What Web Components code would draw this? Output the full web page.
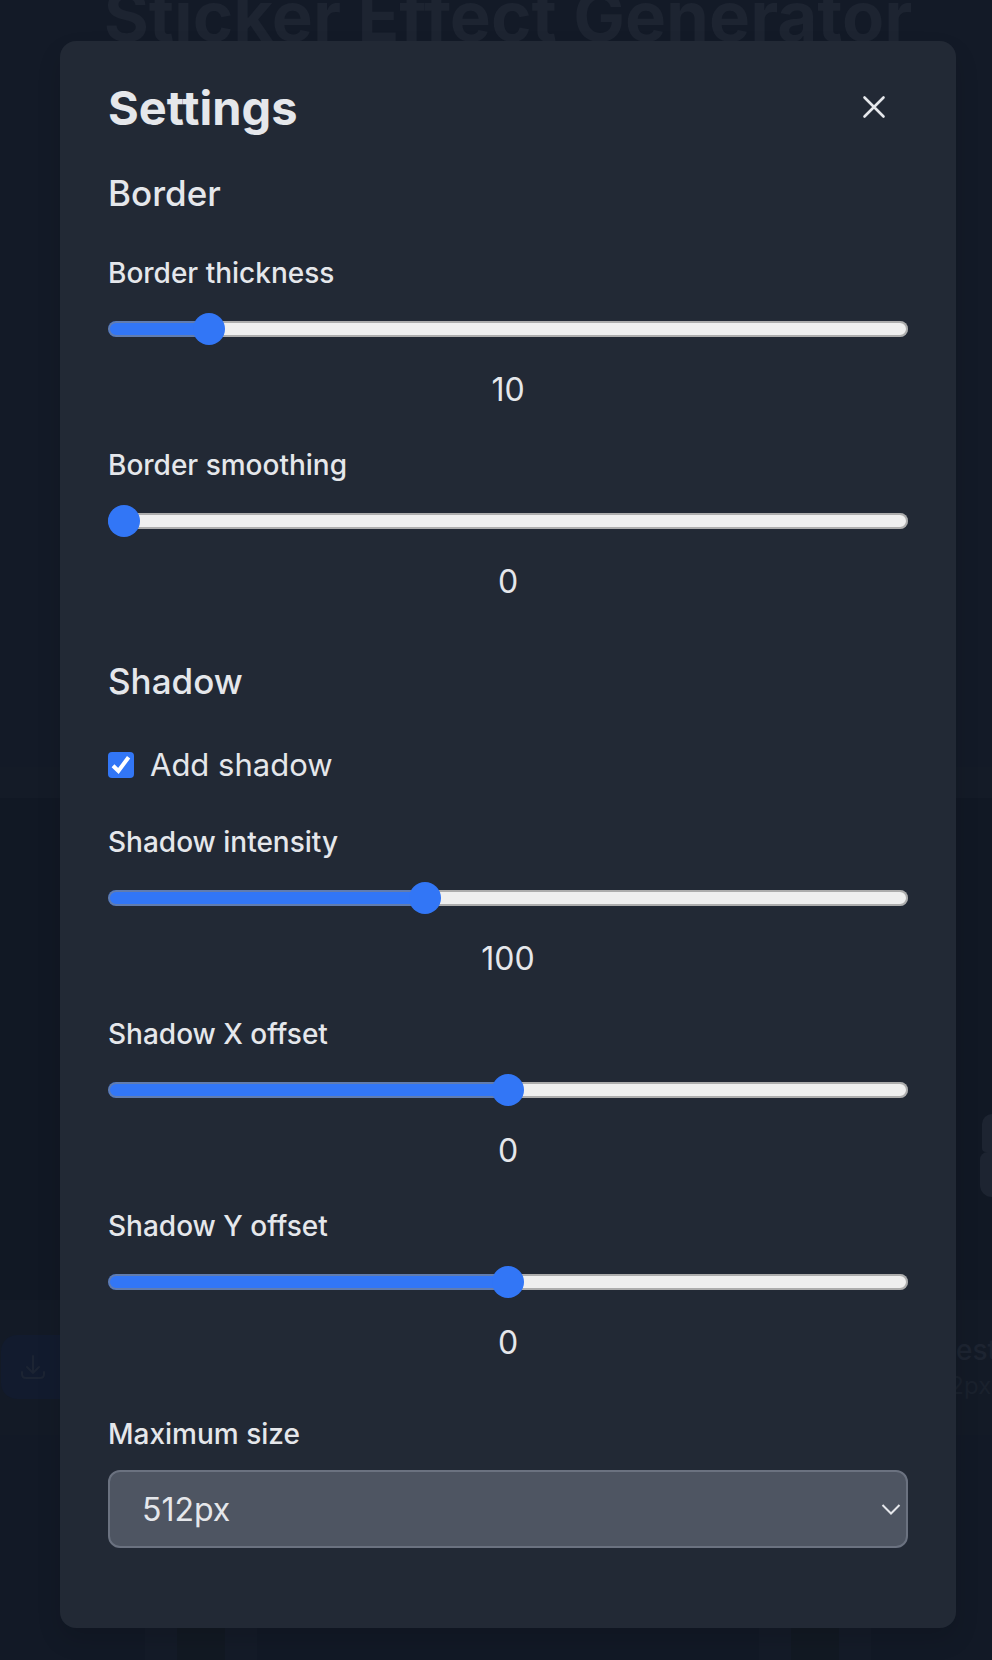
<!DOCTYPE html>
<html lang="en">
<head>
<meta charset="utf-8">
<meta name="viewport" content="width=device-width, initial-scale=1">
<title>Sticker Effect Generator</title>
<style>
  html { background: #121926; }
  body { margin: 0; font-family: Inter, "Liberation Sans", sans-serif; color: #e5e7eb; }
</style>
</head>
<body>
<sticker-app>
  <settings-dialog heading="Settings">
    <settings-group heading="Border">
      <range-field label="Border thickness" min="0" max="90" value="10"></range-field>
      <range-field label="Border smoothing" min="0" max="90" value="0"></range-field>
    </settings-group>
    <settings-group heading="Shadow">
      <check-field checked>Add shadow</check-field>
      <range-field label="Shadow intensity" min="0" max="255" value="100"></range-field>
      <range-field label="Shadow X offset" min="-50" max="50" value="0"></range-field>
      <range-field label="Shadow Y offset" min="-50" max="50" value="0"></range-field>
    </settings-group>
    <select-field label="Maximum size" options="512px,1024px,2048px"></select-field>
  </settings-dialog>
</sticker-app>

<script>
class BaseElement extends HTMLElement {
  render(html) {
    const template = document.createElement('template');
    template.innerHTML = html;
    this.attachShadow({ mode: 'open' }).append(template.content.cloneNode(true));
  }
}

class StickerApp extends BaseElement {
  connectedCallback() {
    this.render(`
      <style>
        :host { display: block; position: relative; padding: 41px 36px 32px 60px; }
        page-backdrop { position: absolute; inset: 0; }
        main { position: relative; max-width: 896px; margin: 0 auto; }
      </style>
      <page-backdrop></page-backdrop>
      <main><slot></slot></main>`);
  }
}

class PageBackdrop extends BaseElement {
  connectedCallback() {
    this.render(`
      <style>
        :host { display: flex; flex-direction: column; overflow: hidden; background: #121926; color: #1d2431; }
        header { flex: 0 0 767px; background: #131a27; box-sizing: border-box; padding: 0 36px 0 60px; }
        h1 { margin: -28px 0 0; font-size: 69px; line-height: 88px; font-weight: 700; text-align: center; white-space: nowrap; }
        .strip { flex: 0 0 31px; background: #141b27; }
        .stage { flex: 0 0 502px; background: #111824; display: flex; flex-direction: column; align-items: flex-end; justify-content: flex-end; padding-bottom: 103px; box-sizing: border-box; }
        .stage i { width: 10px; height: 38px; border-radius: 10px 0 0 4px; background: #1d2431; }
        .stage i + i { width: 12px; height: 45px; border-radius: 10px 0 0 16px; }
        .bar { flex: 0 0 135px; background: #131a26; display: flex; align-items: center; justify-content: space-between; }
        button { width: 96px; height: 64px; margin: 0 0 2px 1px; padding: 0 0 0 18px; border: 0; border-radius: 16px; background: #121b2e; color: #1c2433; text-align: left; }
        svg { display: block; }
        .info { flex: 0 0 77px; min-width: 0; line-height: 36px; white-space: nowrap; }
        p { margin: 0; }
        .name { font-size: 28px; font-weight: 500; }
        .size { font-size: 24px; color: #1a212d; padding-left: 10px; }
        .foot { flex: 1; display: flex; justify-content: space-between; align-items: flex-end; padding: 0 121px 0 145px; }
        .tile { box-sizing: border-box; width: 112px; height: 48px; background: #141b28; padding: 0 32px; }
        .tile div { height: 100%; background: #121923; }
      </style>
      <header><h1>Sticker Effect Generator</h1></header>
      <div class="strip"></div>
      <div class="stage"><i></i><i></i></div>
      <div class="bar">
        <button type="button" aria-label="Download">
          <svg width="28" height="28" viewBox="0 0 28 28" fill="none" stroke="currentColor" stroke-width="2" stroke-linecap="round" stroke-linejoin="round"><path d="M14 3v17M8 14l6 6 6-6M3 19v2q0 4 4 4h14q4 0 4-4v-2"/></svg>
        </button>
        <div class="info"><p class="name">Latest</p><p class="size">512px</p></div>
      </div>
      <div class="foot"><div class="tile"><div></div></div><div class="tile"><div></div></div></div>`);
  }
}

class SettingsDialog extends BaseElement {
  connectedCallback() {
    this.render(`
      <style>
        :host { display: block; }
        section { background: #222935; border-radius: 16px; padding: 39px 48px 80px; box-shadow: 0 12px 24px rgba(0, 0, 0, .12); }
        header { display: flex; align-items: center; justify-content: space-between; margin-bottom: 29px; }
        h2 { margin: 0; font-size: 47px; line-height: 56px; font-weight: 700; }
        button { display: flex; align-items: center; justify-content: center; width: 68px; height: 52px; margin: 0 0 2px; padding: 0; border: 0; background: none; color: inherit; cursor: pointer; }
        .body { display: grid; gap: 48px; }
      </style>
      <section role="dialog" aria-labelledby="title">
        <header>
          <h2 id="title">${this.getAttribute('heading')}</h2>
          <button type="button" aria-label="Close">
            <svg width="24" height="24" viewBox="0 0 24 24" fill="none" stroke="currentColor" stroke-width="2.6" stroke-linecap="round"><path d="M2.500 2.500l19 19M21.500 2.500l-19 19"/></svg>
          </button>
        </header>
        <div class="body"><slot></slot></div>
      </section>`);
  }
}

class SettingsGroup extends BaseElement {
  connectedCallback() {
    this.render(`
      <style>
        :host { display: grid; gap: 32px; }
        h3 { margin: 0; font-size: 35px; line-height: 56px; font-weight: 500; }
      </style>
      <h3>${this.getAttribute('heading')}</h3>
      <slot></slot>`);
  }
}

class RangeField extends BaseElement {
  connectedCallback() {
    const { label, min, max, value } = Object.fromEntries([...this.attributes].map(a => [a.name, a.value]));
    this.render(`
      <style>
        :host { display: grid; gap: 20px; }
        label { font-size: 28px; line-height: 40px; font-weight: 500; }
        output { font-size: 32px; line-height: 50px; margin-bottom: -2px; text-align: center; }
        input {
          --fill: calc(16px + (100% - 32px) * var(--ratio));
          appearance: none; -webkit-appearance: none; display: block; width: 100%; height: 32px; margin: 0; background: none; cursor: pointer;
        }
        input::-webkit-slider-runnable-track {
          height: 16px; border-radius: 8px; box-shadow: inset 0 0 0 2px rgba(128, 128, 128, .6);
          background: linear-gradient(#3276f6, #3276f6) 0 0 / var(--fill) 100% no-repeat, #efefef;
        }
        input::-webkit-slider-thumb {
          -webkit-appearance: none; width: 32px; height: 32px; margin-top: -8px; border: 0; border-radius: 50%; background: #3276f6;
        }
      </style>
      <label for="range">${label}</label>
      <input id="range" type="range" min="${min}" max="${max}" value="${value}">
      <output for="range">${value}</output>`);
    const input = this.shadowRoot.querySelector('input');
    const output = this.shadowRoot.querySelector('output');
    const update = () => {
      input.style.setProperty('--ratio', (input.value - min) / (max - min));
      output.value = input.value;
    };
    input.addEventListener('input', update);
    update();
  }
}

class CheckField extends BaseElement {
  connectedCallback() {
    this.render(`
      <style>
        :host { display: block; margin-bottom: 1px; }
        label { display: flex; align-items: center; gap: 16px; font-size: 31px; line-height: 48px; }
        .box { display: grid; }
        .box > * { grid-area: 1 / 1; }
        input { appearance: none; -webkit-appearance: none; width: 26px; height: 26px; margin: 0; border-radius: 4px; background: #efefef; }
        input:checked { background: #3276f6; }
        svg { pointer-events: none; visibility: hidden; }
        input:checked + svg { visibility: visible; }
      </style>
      <label>
        <span class="box">
          <input type="checkbox" ${this.hasAttribute('checked') ? 'checked' : ''}>
          <svg width="26" height="26" viewBox="0 0 26 26" fill="none" stroke="#fff" stroke-width="4"><path d="M5 13.800l5.400 5.200L20.600 5.200"/></svg>
        </span>
        <span><slot></slot></span>
      </label>`);
  }
}

class SelectField extends BaseElement {
  connectedCallback() {
    const options = this.getAttribute('options').split(',').map(o => `<option>${o}</option>`).join('');
    this.render(`
      <style>
        :host { display: grid; gap: 16px; }
        label { font-size: 28px; line-height: 40px; font-weight: 500; }
        .wrap { position: relative; }
        select {
          appearance: none; -webkit-appearance: none; display: block; box-sizing: border-box; width: 100%; height: 78px; padding: 0 64px 0 32px;
          border: 2px solid #6b7280; border-radius: 12px; background: #4e5562; color: inherit; font: inherit; font-size: 32px;
        }
        svg { position: absolute; right: 7px; top: 33px; pointer-events: none; }
      </style>
      <label for="size">${this.getAttribute('label')}</label>
      <div class="wrap">
        <select id="size">${options}</select>
        <svg width="20" height="14" viewBox="0 0 20 14" fill="none" stroke="currentColor" stroke-width="2"><path d="M1.500 2l8.500 8.500L18.500 2"/></svg>
      </div>`);
  }
}

customElements.define('page-backdrop', PageBackdrop);
customElements.define('sticker-app', StickerApp);
customElements.define('settings-dialog', SettingsDialog);
customElements.define('settings-group', SettingsGroup);
customElements.define('range-field', RangeField);
customElements.define('check-field', CheckField);
customElements.define('select-field', SelectField);
</script>
</body>
</html>
